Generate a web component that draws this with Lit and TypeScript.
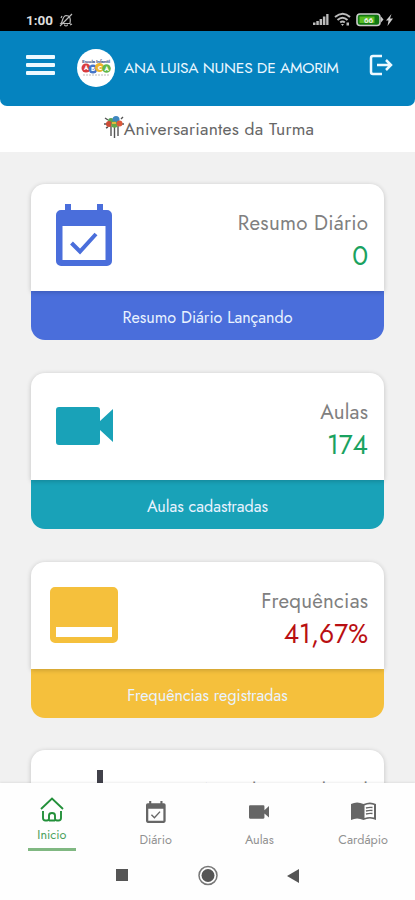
import { LitElement, html, css, svg } from "lit";
import { customElement } from "lit/decorators.js";

const calendar = svg`<path fill="currentColor" fill-rule="evenodd" d="M9 0h6v6H9zM41 0h6v6h-6zM5 6h46a5 5 0 0 1 5 5v46a5 5 0 0 1-5 5H5a5 5 0 0 1-5-5V11a5 5 0 0 1 5-5zM6.500 22v34h43V22z"/><path d="M15.500 39l8.500 8.500L40 30" fill="none" stroke="currentColor" stroke-width="4"/>`;
const camera = svg`<path fill="currentColor" d="M3 0h38a3 3 0 0 1 3 3v11L57 2v33L44 23v12a3 3 0 0 1-3 3H3a3 3 0 0 1-3-3V3a3 3 0 0 1 3-3z"/>`;
const cards = [
  { tone: "blue", icon: html`<svg width="57" height="62" viewBox="0 0 57 62">${calendar}</svg>`, title: "Resumo Diário", value: "0", foot: "Resumo Diário Lançando" },
  { tone: "teal", icon: html`<svg width="57" height="38" viewBox="0 0 57 38">${camera}</svg>`, title: "Aulas", value: "174", foot: "Aulas cadastradas" },
  { tone: "yellow", icon: html`<svg width="68" height="56" viewBox="0 0 68 56"><path fill="currentColor" fill-rule="evenodd" d="M5 0h58a5 5 0 0 1 5 5v46a5 5 0 0 1-5 5H5a5 5 0 0 1-5-5V5a5 5 0 0 1 5-5zM6 40v10h56V40z"/></svg>`, title: "Frequências", value: "41,67%", foot: "Frequências registradas" },
];

@customElement("app-root")
export class AppRoot extends LitElement {
  static styles = css`
    :host { display: flex; flex-direction: column; width: 415px; height: 900px; overflow: hidden; background: #f1f1f1; font-family: Jost, Lato, sans-serif; color: #737373; }
    * { box-sizing: border-box; }
    svg { display: block; flex: none; }
    .status { height: 31px; flex: none; background: #000; color: #ddd; display: flex; align-items: center; padding: 8px 21px 0 26px; font: 700 13.5px Roboto, sans-serif; }
    .status .bell { margin-left: 6px; }
    .status .sys { margin-left: auto; }
    .under { background: #fff; flex: none; }
    .bar { height: 75px; background: #0583bf; border-radius: 0 0 7px 7px; display: flex; align-items: center; color: #eaf7ff; padding: 0 22px 2px 26px; }
    .menu, .exit { margin-bottom: 5px; }
    .logo { margin-left: 22px; }
    .name { margin-left: 9px; width: 218px; font-size: 15.5px; white-space: nowrap; letter-spacing: -0.22px; }
    .exit { margin-left: auto; }
    .birthday { height: 46px; display: flex; align-items: center; justify-content: center; font-size: 17.5px; letter-spacing: 0.25px; color: #666; white-space: nowrap; padding-left: 3px; }
    .birthday svg { margin-bottom: 4px; }
    .list { flex: 1; min-height: 0; overflow: hidden; padding: 32px 31px 0; }
    .card { height: 156px; border-radius: 14px; margin-bottom: 33px; display: flex; flex-direction: column; }
    .yellow.card { margin-bottom: 32px; }
    .top { position: relative; height: 107px; flex: none; background: #fff; border-radius: 14px 14px 0 0; box-shadow: 0 1px 5px #0003; display: flex; justify-content: space-between; padding: 0 16px 0 25px; }
    .yellow .top { padding-left: 19px; }
    .pic { height: 106px; display: flex; align-items: center; }
    .blue .pic { height: 102px; }
    .figures { text-align: right; padding-top: 26px; white-space: nowrap; }
    .title { font-size: 20.5px; line-height: 27px; font-weight: 400; letter-spacing: 0.25px; margin-right: -0.25px; color: #808080; }
    .value { font-size: 26.4px; line-height: 38px; color: #1aa260; }
    .yellow .value { color: #b90f12; }
    .foot { flex: 1; border-radius: 0 0 14px 14px; display: flex; align-items: center; justify-content: center; color: #e9f3ff; font-size: 16.1px; padding-top: 4px; white-space: nowrap; }
    .blue .pic { color: #4a6edb; }
    .blue .foot { background: #4a6edb; }
    .teal .pic { color: #19a2b8; }
    .teal .foot { background: #19a2b8; }
    .yellow .pic { color: #f5c03c; }
    .yellow .foot { background: #f5c03c; }
    .next { padding-left: 66px; }
    .next .figures { padding-top: 28px; }
    .next .title { letter-spacing: 0.9px; margin-right: -0.9px; }
    .tabs { height: 69px; flex: none; background: #fefefe; display: flex; box-shadow: 0 -1px 2px #00000012; position: relative; }
    .tab { width: 104px; display: flex; flex-direction: column; align-items: center; font-size: 12.6px; color: #919191; }
    .tab svg { color: #666; }
    .tab .glyph { height: 35px; width: 26px; display: flex; align-items: center; justify-content: center; margin-top: 11px; }
    .tab .label { line-height: 16px; margin-top: 3px; }
    .active, .tab.active svg { color: #23903a; }
    .tab.active .glyph { margin-top: 9px; }
    .tab.active .label { margin-top: 0; color: #4aa05a; }
    .line { width: 48px; height: 3px; background: #80b882; margin-top: 5px; }
    .nav { position: relative; height: 48px; flex: none; background: #fefefe; padding-left: 115px; }
  `;
  render() {
    return html`
      <div class="status"><span>1:00</span>
        <svg class="bell" width="14" height="14" viewBox="0 0 14 14" fill="none" stroke="#bbb" stroke-width="1.200"><path d="M2 10.500c2-2 1-7 5-8 4 0 5 3 4 8zM5.500 11.500c0 2 3 2 3 0M1 13L13 1M2 5l1-2M11 12l2-1"/></svg>
        <svg class="sys" width="82" height="15" viewBox="0 0 82 15"><path fill="#bbb" d="M1 13v-2.500h2.500V13zM4.300 13V9h2.500v4zM7.600 13V7h2.500v6zM10.900 13V4.500h2.500V13zM14.200 13V2h2.300v11z"/><g fill="none" stroke="#bbb" stroke-width="2"><path d="M23 5q8-6.500 15 0M25.500 8q5-4.500 10 0M28.200 10.500q2.300-2 4.600 0"/></g><path fill="#bbb" d="M29 12h3l-1.500 2zM34.500 10.500h2.500v3h-2.500z"/><rect x="45" y="2" width="23" height="11.500" rx="3" fill="#171" stroke="#ccc" stroke-width="1.600"/><rect x="47.500" y="4.500" width="15" height="6.500" fill="#58bd22"/><path fill="#ccc" d="M69 4.500l2.500 3-2.500 3zM79.500 2L74 8.500h2.500l-1 5.500 5.500-7.500h-3z"/><text x="52" y="10.600" font-size="8" font-weight="700" fill="#eee">66</text></svg>
      </div>
      <div class="under">
        <div class="bar">
          <svg class="menu" width="29" height="20" viewBox="0 0 29 20" fill="#eef9ff"><rect width="29" height="4" rx="1"/><rect y="8" width="29" height="4" rx="1"/><rect y="16" width="29" height="4" rx="1"/></svg>
          <svg class="logo" width="38" height="38" viewBox="0 0 38 38"><circle cx="19" cy="19" r="19" fill="#fff"/><text x="5" y="13.500" font-size="5" font-weight="700" textLength="28" fill="#526491">Escola Infantil</text><circle cx="9" cy="19" r="4.500" fill="#d93c3e"/><circle cx="16" cy="20" r="4.500" fill="#4776c8"/><circle cx="22.500" cy="18.500" r="4.500" fill="#edb52e"/><circle cx="29.500" cy="19.500" r="4.300" fill="#62b849"/><g fill="#fff" font-size="6" font-weight="700"><text x="7" y="21">A</text><text x="14" y="22">B</text><text x="21" y="21">C</text><text x="27.500" y="22">A</text></g><path d="M6 26h26" stroke="#bbb" stroke-dasharray="2 1"/></svg>
          <span class="name">ANA LUISA NUNES DE AMORIM</span>
          <svg class="exit" width="24" height="22" viewBox="0 0 24 22" fill="none" stroke="#eef9ff" stroke-width="2.500"><path d="M13 2H4q-2 0-2 2v14q0 2 2 2h9M8 11h14M17 6l5 5-5 5"/></svg>
        </div>
        <div class="birthday"><svg width="20" height="22" viewBox="0 0 20 22"><path d="M7 10v10M10.500 10v12M14 10v10M1 2l3 2M17 3l2-2M0 8h3M17 8h3M2 12l2-1" stroke="#555" stroke-width="1.400"/><circle cx="7" cy="5" r="3" fill="#57a457"/><circle cx="12" cy="3.500" r="3.500" fill="#3f87bf"/><circle cx="5" cy="8" r="3" fill="#cb4b35"/><circle cx="10.500" cy="8.500" r="3.300" fill="#67a84b"/><circle cx="15.500" cy="7.500" r="3" fill="#dc593a"/><path d="M8 6h4v2H8z" fill="#e5b73b"/></svg><span>Aniversariantes da Turma</span></div>
      </div>
      <div class="list">
        ${cards.map(c => html`<div class="card ${c.tone}"><div class="top"><div class="pic">${c.icon}</div><div class="figures"><div class="title">${c.title}</div><div class="value">${c.value}</div></div></div><div class="foot">${c.foot}</div></div>`)}
        <div class="card"><div class="top next"><svg width="6" height="50" viewBox="0 0 6 50"><path d="M0 20h6v30H0z" fill="#41414a"/></svg><div class="figures"><div class="title">Acordo / Cultural</div></div></div></div>
      </div>
      <div class="tabs">
        <div class="tab active"><div class="glyph"><svg width="24" height="25" viewBox="0 0 24 25" fill="none" stroke="currentColor" stroke-width="1.900"><path d="M1 12L12 1.500 23 12M3 14v7q0 2.500 2.500 2.500H7q2 0 2-2v-3q0-2.500 3-2.500t3 2.500v3q0 2 2 2h1.500q2.500 0 2.500-2.500v-7M9 23.500h6"/></svg></div><span class="label">Inicio</span><span class="line"></span></div>
        <div class="tab"><div class="glyph"><svg width="20" height="22" viewBox="0 0 57 62">${calendar}</svg></div><span class="label">Diário</span></div>
        <div class="tab"><div class="glyph"><svg width="20" height="14" viewBox="0 0 57 38">${camera}</svg></div><span class="label">Aulas</span></div>
        <div class="tab"><div class="glyph"><svg width="25" height="19" viewBox="0 0 25 19"><path fill="currentColor" d="M0 2q6-3 12.500 0Q19 -1 25 2v16q-6-3-12.500 0Q6 15 0 18z"/><path fill="#fff" d="M13.500 3.500q4.500-2 9.500-.5v12.500q-5-1-9.500.5z"/><path d="M15 6q3.500-1 6.500-.500M15 9q3.500-1 6.500-.500M15 12q3.500-1 6.500-.500" stroke="currentColor" stroke-width="1.400" fill="none"/></svg></div><span class="label">Cardápio</span></div>
      </div>
      <div class="nav"><svg width="185" height="48" viewBox="0 0 185 48"><rect x="1" y="17" width="12" height="12" fill="#555"/><circle cx="93" cy="23.500" r="9" fill="none" stroke="#777" stroke-width="1.500"/><circle cx="93" cy="23.500" r="6.500" fill="#555"/><path d="M184 17v14l-12-7z" fill="#555"/></svg></div>`;
  }
}
